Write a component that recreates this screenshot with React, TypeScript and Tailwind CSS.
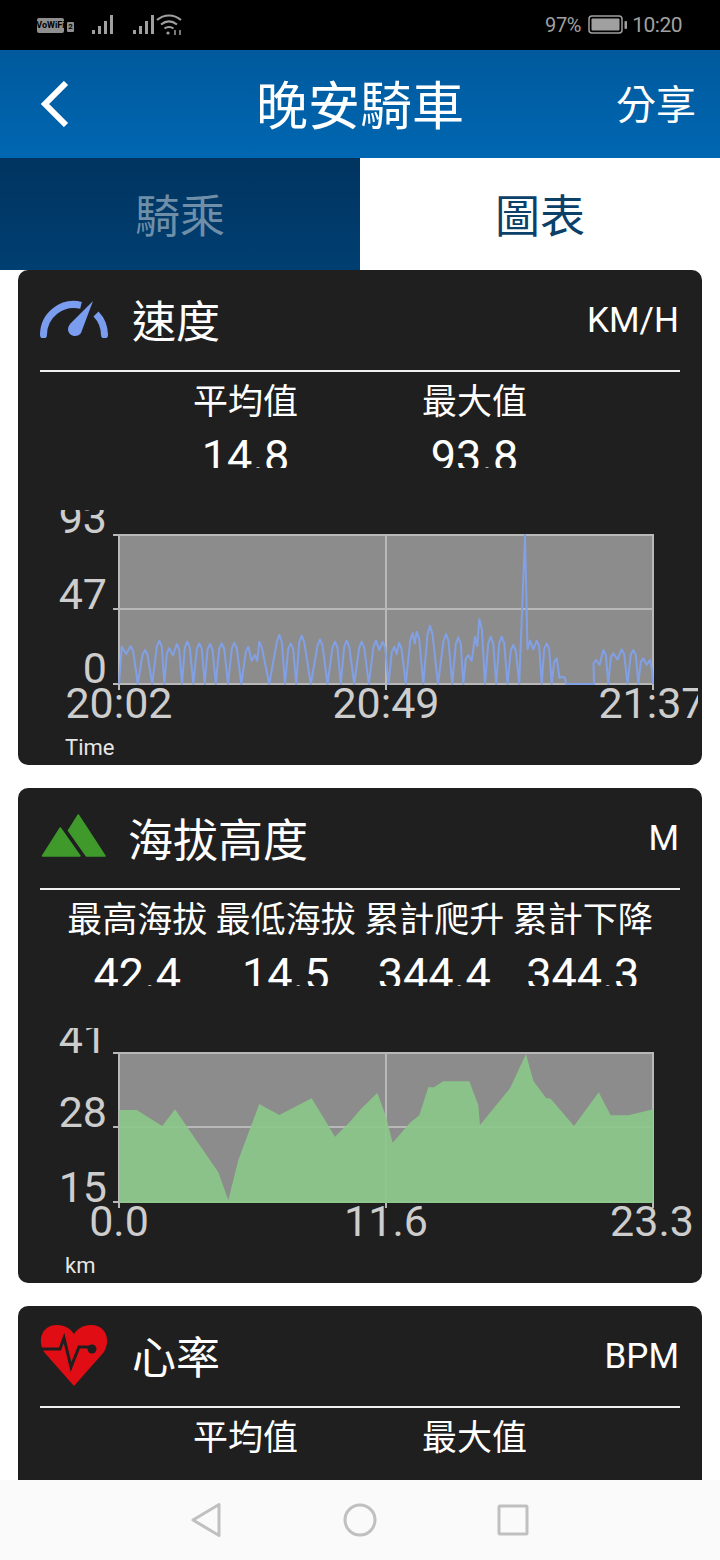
import { ReactNode } from 'react';

const CJK = "font-['Roboto','Noto_Sans_CJK_TC',sans-serif]";

// plot box inside a chart, in chart pixels
const PLOT = { left: 101, right: 635, top: 25, bottom: 174 };

type Peak = [number, number];

const leftPeaks: Peak[] = [
  [365, 470], [392, 468], [435, 480], [478, 452], [508, 475], [530, 462], [562, 455], [598, 460], [630, 462],
  [665, 460], [703, 458], [745, 470], [765, 495], [778, 455], [838, 435], [872, 460], [905, 437], [960, 448],
  [1005, 455], [1040, 452],
].map(([x, y]) => [x / 3, (582 - y) / 3] as Peak);

const rightPeaks: Peak[] = [
  [5, 455], [48, 452], [68, 455], [103, 470], [117, 458], [158, 430], [170, 425], [210, 408], [258, 432],
  [295, 442], [325, 495], [345, 440], [358, 388], [392, 440], [425, 440], [460, 465], [495, 135], [510, 452],
  [530, 452], [560, 460], [590, 505], [607, 560], [708, 510], [730, 480], [760, 490], [785, 478], [820, 480],
  [850, 505], [870, 510],
].map(([x, y]) => [360 + x / 3, (582 - y) / 3] as Peak);

const speedLine = () => {
  const peaks = [...leftPeaks, ...rightPeaks];
  const pts: string[] = [`${PLOT.left},${PLOT.bottom}`];
  const add = (x: number, y: number) => pts.push(`${x.toFixed(1)},${y.toFixed(1)}`);
  peaks.forEach(([x, h], i) => {
    const px = x - 18;
    const prev = peaks[i - 1];
    const next = peaks[i + 1];
    const spike = h > 100;
    // rounded shoulders make the humps look like the ride's stops and starts
    if (!spike && prev && x - prev[0] >= 9) add(px - 2.5, PLOT.bottom - h * 0.86);
    add(px, PLOT.bottom - h);
    if (!spike && next && next[0] - x >= 9) add(px + 2.5, PLOT.bottom - h * 0.86);
    if (!next) return;
    const gap = next[0] - x;
    if (gap > 25) {
      add(px + 4, PLOT.bottom);
      add(px + gap - 2, PLOT.bottom);
    } else if (gap < 9) {
      add(px + gap / 2, PLOT.bottom - Math.min(h, next[1]) * 0.8);
    } else {
      add(px + gap / 2, PLOT.bottom);
    }
  });
  add(PLOT.right - 1, PLOT.bottom - 14);
  add(PLOT.right, PLOT.bottom);
  return pts.join(' ');
};

const elevationPoints = [
  [358, 300], [410, 300], [487, 348], [525, 298], [655, 487], [685, 570], [715, 450], [778, 282], [838, 315],
  [935, 265], [1005, 380], [1050, 335], [1080, 300],
]
  .map(([x, y]) => [x / 3, y])
  .concat(
    [
      [52, 248], [78, 320], [98, 398], [150, 338], [178, 316], [205, 232], [222, 232], [250, 214], [328, 214],
      [355, 285], [360, 345], [450, 235], [498, 132], [520, 212], [558, 264], [572, 266], [642, 348], [716, 247],
      [752, 316], [805, 316], [880, 298],
    ].map(([x, y]) => [360 + x / 3, y]),
  )
  .map(([x, y]) => `${(x - 18).toFixed(1)},${(y / 3 - 18).toFixed(1)}`);

function SpeedIcon() {
  return (
    <svg width="68" height="38" viewBox="0 0 68 38" fill="none" className="-mt-[2px]">
      <path d="M3.500 35A30.500 30.500 0 0 1 41 5.300" stroke="#7b9df0" strokeWidth="7" />
      <path d="M56 14A30.500 30.500 0 0 1 64.500 35" stroke="#7b9df0" strokeWidth="7" />
      <circle cx="3.500" cy="35" r="3.500" fill="#7b9df0" />
      <circle cx="64.500" cy="35" r="3.500" fill="#7b9df0" />
      <path d="M53 1L41 33C38 38 28 37 28 29C28 26 30 24 32 22Z" fill="#7b9df0" />
    </svg>
  );
}

function MountainIcon() {
  return (
    <svg width="66" height="44" viewBox="0 0 66 44" fill="#3f9a2b" stroke="#3f9a2b" strokeWidth="1.500" strokeLinejoin="round" className="-mt-[5px]">
      <path d="M1.500 42L19.300 14L39 42Z" />
      <path d="M27.500 16.500L37.300 1L64 42H45.500Z" />
    </svg>
  );
}

function HeartIcon() {
  return (
    <svg width="68" height="61" viewBox="0 0 68 61" fill="none" className="-mt-[1px]">
      <path d="M34 61L4 27C-3 15 2 0 17 0C25 0 31 4 34 9C37 4 43 0 51 0C66 0 71 15 64 27Z" fill="#e00d14" />
      <path d="M0 24H20L24 13L31 42L39 22H52" stroke="#1f1f1f" strokeWidth="3" />
      <circle cx="52" cy="24" r="4.500" fill="#1f1f1f" />
    </svg>
  );
}

interface AxisLabel {
  text: string;
  className: string;
}

interface ChartProps {
  yLabels: AxisLabel[];
  xLabels: AxisLabel[];
  unit: string;
  children: ReactNode;
}

function Chart({ yLabels, xLabels, unit, children }: ChartProps) {
  return (
    <div className="relative h-[255px] w-[680px] overflow-hidden font-['Roboto',sans-serif] text-[43px] leading-none text-[#cdcdcd]">
      <svg width="680" height="255" viewBox="0 0 680 255" fill="none" className="absolute left-0 top-0">
        <rect x="101" y="25" width="534" height="149" fill="#8c8c8c" />
        <path
          d="M95 25H635V174H95M95 99H635M101 25V180M368 25V180M635 25V180"
          stroke="#b8b8b8"
          strokeWidth="2"
        />
        {children}
      </svg>
      {yLabels.map((label) => (
        <span key={label.text} className={`absolute left-0 w-[89px] text-right ${label.className}`}>
          {label.text}
        </span>
      ))}
      {xLabels.map((label) => (
        <span key={label.text} className={`absolute top-[172px] -translate-x-1/2 ${label.className}`}>
          {label.text}
        </span>
      ))}
      <span className="absolute left-[47px] top-[227px] text-[22px] text-[#e6e6e6]">{unit}</span>
    </div>
  );
}

interface CardProps {
  icon: ReactNode;
  title: string;
  titleClass: string;
  unit: string;
  stats: { label: string; value?: string }[];
  colClass: string;
  children?: ReactNode;
}

function Card({ icon, title, titleClass, unit, stats, colClass, children }: CardProps) {
  return (
    <div className="h-[495px] w-[684px] shrink-0 overflow-hidden rounded-[10px] bg-[#1f1f1f] text-white">
      <div className="mx-[22px] flex h-[102px] items-center border-b-2 border-[#f0f0f0] pr-[1px]">
        <div className="flex w-[68px] shrink-0 justify-center">{icon}</div>
        <span className={`${titleClass} pt-[6px] text-[44px] leading-none`}>{title}</span>
        <span className="ml-auto font-['Roboto',sans-serif] text-[35px] leading-none">{unit}</span>
      </div>
      <div className="flex h-[96px] justify-center overflow-hidden">
        {stats.map((stat) => (
          <div key={stat.label} className={`${colClass} shrink-0 pt-[12px] text-center`}>
            <div className="text-[35px] leading-[38px]">{stat.label}</div>
            <div className="mt-[12px] font-['Roboto',sans-serif] text-[45px] leading-[45px]">{stat.value}</div>
          </div>
        ))}
      </div>
      <div className="mt-[42px]">{children}</div>
    </div>
  );
}

function StatusBar() {
  return (
    <div className="flex h-[50px] shrink-0 items-center bg-black pl-[37px] pr-[38px] font-['Roboto',sans-serif] text-[#a0a0a0]">
      <span className="flex h-[15px] w-[27px] items-center justify-center rounded-[2px] bg-[#8f8f8f] text-[9px] font-bold leading-none text-black">
        VoWiFi
      </span>
      <span className="ml-[3px] mt-[4px] flex h-[10px] w-[7px] items-center justify-center rounded-[1px] bg-[#8f8f8f] text-[8px] font-bold leading-none text-black">
        2
      </span>
      <svg width="22" height="20" viewBox="0 0 22 20" className="ml-[18px]" fill="#a0a0a0">
        <rect x="0" y="15" width="3" height="4" />
        <rect x="6" y="11" width="3" height="8" />
        <rect x="12" y="6" width="3" height="13" />
        <rect x="18" y="0" width="3" height="19" />
      </svg>
      <svg width="22" height="20" viewBox="0 0 22 20" className="ml-[19px]" fill="#a0a0a0">
        <rect x="0" y="15" width="3" height="4" />
        <rect x="6" y="11" width="3" height="8" />
        <rect x="12" y="6" width="3" height="13" />
        <rect x="18" y="0" width="3" height="19" />
      </svg>
      <svg width="26" height="22" viewBox="0 0 26 22" className="ml-[1px]" fill="none" stroke="#a0a0a0" strokeWidth="2.200">
        <path d="M1 6C8 0 18 0 25 6" />
        <path d="M5 10.500C10 6.500 16 6.500 21 10.500" />
        <path d="M8.500 14.500C11 12.500 15 12.500 17.500 14.500" />
        <circle cx="12" cy="19" r="1.600" fill="#a0a0a0" stroke="none" />
        <path d="M19 16V21M24 16V21" strokeWidth="1.500" />
      </svg>
      <span className="ml-auto text-[20px] leading-none tracking-[-0.3px]">97%</span>
      <svg width="40" height="20" viewBox="0 0 40 20" className="ml-[7px]" fill="none">
        <rect x="1" y="1" width="33" height="17" rx="3" stroke="#a0a0a0" strokeWidth="1.500" />
        <rect x="3.500" y="3.500" width="28" height="12" rx="1" fill="#a0a0a0" />
        <rect x="36.500" y="6" width="2.500" height="8" rx="1" fill="#a0a0a0" />
      </svg>
      <span className="ml-[4px] text-[21px] leading-none tracking-[-0.5px]">10:20</span>
    </div>
  );
}

function NavBar() {
  return (
    <div className="flex h-[80px] shrink-0 items-center justify-center bg-[#fafafa] pr-[1px]">
      <svg width="32" height="36" viewBox="0 0 32 36" fill="none" stroke="#c0c0c0" strokeWidth="3" strokeLinejoin="round">
        <path d="M29 2.500V33.500L3 18Z" />
      </svg>
      <svg width="34" height="34" viewBox="0 0 34 34" className="ml-[121px]" fill="none" stroke="#c0c0c0" strokeWidth="3">
        <circle cx="17" cy="17" r="15" />
      </svg>
      <svg width="32" height="32" viewBox="0 0 32 32" className="ml-[120px]" fill="none" stroke="#c0c0c0" strokeWidth="3" strokeLinejoin="round">
        <rect x="2" y="2" width="28" height="28" rx="1" />
      </svg>
    </div>
  );
}

export default function App() {
  return (
    <div className={`${CJK} flex h-[1560px] w-[720px] flex-col overflow-hidden bg-white`}>
      <StatusBar />

      <div className="grid h-[108px] shrink-0 grid-cols-[1fr_auto_1fr] items-center bg-gradient-to-b from-[#00599c] to-[#0067b2] text-white">
        <svg width="30" height="46" viewBox="0 0 30 46" className="ml-[40px]" fill="none" stroke="#fff" strokeWidth="6">
          <path d="M26 2L5 23L26 44" />
        </svg>
        <span className="pt-[7px] text-[52px] leading-none">晚安騎車</span>
        <span className="justify-self-end pr-[24px] pt-[4px] text-[40px] leading-none">分享</span>
      </div>

      <div className="flex h-[112px] shrink-0 text-[45px] leading-none">
        <div className="flex w-[360px] items-center justify-center bg-gradient-to-b from-[#00345f] to-[#003f72] pt-[6px] text-[#6f8fa9]">
          騎乘
        </div>
        <div className="flex w-[360px] items-center justify-center pt-[6px] text-[#0b4169]">圖表</div>
      </div>

      <div className="flex min-h-0 flex-1 flex-col gap-[23px] overflow-hidden px-[18px]">
        <Card
          icon={<SpeedIcon />}
          title="速度"
          titleClass="ml-[24px]"
          unit="KM/H"
          colClass="w-[229px]"
          stats={[
            { label: '平均值', value: '14.8' },
            { label: '最大值', value: '93.8' },
          ]}
        >
          <Chart
            unit="Time"
            yLabels={[
              { text: '93', className: 'top-[-13px]' },
              { text: '47', className: 'top-[63px]' },
              { text: '0', className: 'top-[137px]' },
            ]}
            xLabels={[
              { text: '20:02', className: 'left-[101px]' },
              { text: '20:49', className: 'left-[368px]' },
              { text: '21:37', className: 'left-[634px]' },
            ]}
          >
            <polyline points={speedLine()} stroke="#82a0e6" strokeWidth="2" strokeLinejoin="round" />
          </Chart>
        </Card>

        <Card
          icon={<MountainIcon />}
          title="海拔高度"
          titleClass="ml-[20px] text-[45px]"
          unit="M"
          colClass="w-[148.500px]"
          stats={[
            { label: '最高海拔', value: '42.4' },
            { label: '最低海拔', value: '14.5' },
            { label: '累計爬升', value: '344.4' },
            { label: '累計下降', value: '344.3' },
          ]}
        >
          <Chart
            unit="km"
            yLabels={[
              { text: '41', className: 'top-[-11px]' },
              { text: '28', className: 'top-[63px]' },
              { text: '15', className: 'top-[138px]' },
            ]}
            xLabels={[
              { text: '0.0', className: 'left-[101px]' },
              { text: '11.6', className: 'left-[368px]' },
              { text: '23.3', className: 'left-[634px]' },
            ]}
          >
            <polygon
              points={`101,175 ${elevationPoints.join(' ')} 635,175`}
              fill="#8ac789"
              fillOpacity="0.92"
            />
          </Chart>
        </Card>

        <Card
          icon={<HeartIcon />}
          title="心率"
          titleClass="ml-[24px]"
          unit="BPM"
          colClass="w-[229px]"
          stats={[{ label: '平均值' }, { label: '最大值' }]}
        />
      </div>

      <NavBar />
    </div>
  );
}
